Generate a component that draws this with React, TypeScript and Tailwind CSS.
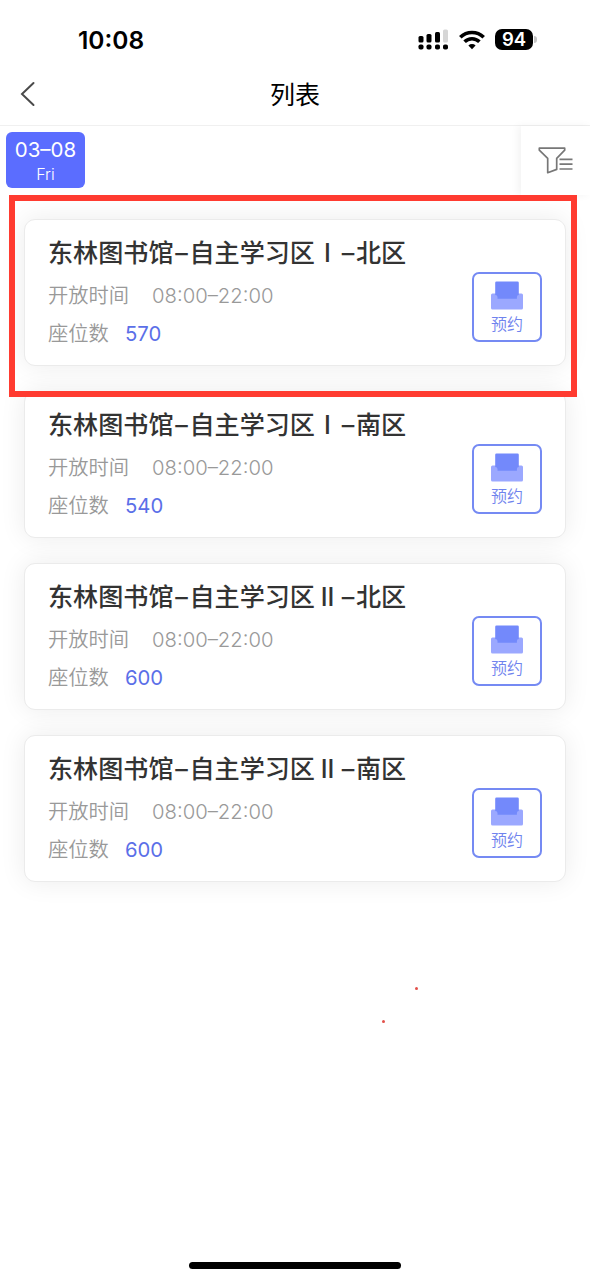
type Area = {
  id: number;
  building: string;
  room: string;
  numeral: string;
  side: string;
  hours: string;
  seats: number;
};

const areas: Area[] = [
  { id: 1, building: "东林图书馆", room: "自主学习区", numeral: "I", side: "北区", hours: "08:00–22:00", seats: 570 },
  { id: 2, building: "东林图书馆", room: "自主学习区", numeral: "I", side: "南区", hours: "08:00–22:00", seats: 540 },
  { id: 3, building: "东林图书馆", room: "自主学习区", numeral: "II", side: "北区", hours: "08:00–22:00", seats: 600 },
  { id: 4, building: "东林图书馆", room: "自主学习区", numeral: "II", side: "南区", hours: "08:00–22:00", seats: 600 },
];

function SignalIcon() {
  return (
    <svg width="31" height="22" viewBox="0 0 31 22">
      <rect x="0.5" y="8" width="5" height="6.5" rx="1.5" />
      <rect x="8.5" y="6" width="5" height="8.5" rx="1.5" />
      <rect x="17" y="4" width="5" height="10.5" rx="1.5" />
      <rect x="25" y="1.5" width="5" height="13" rx="1.5" fill="#d6d6d6" />
      <rect x="0.5" y="16.5" width="5" height="5" rx="1.8" />
      <rect x="8.5" y="16.5" width="5" height="5" rx="1.8" />
      <rect x="17" y="16.5" width="5" height="5" rx="1.8" />
      <rect x="25" y="16.5" width="5" height="5" rx="1.8" />
    </svg>
  );
}

function WifiIcon() {
  return (
    <svg width="26" height="20" viewBox="0 0 26 20" fill="none" stroke="#000" strokeWidth="3.6">
      <path d="M1.3 7.2a16.8 16.8 0 0 1 23.4 0" />
      <path d="M5.6 11.8a10.6 10.6 0 0 1 14.8 0" />
      <path d="M13 19.2l-3.6-3.8a5.2 5.2 0 0 1 7.2 0z" fill="#000" stroke="none" />
    </svg>
  );
}

function FilterIcon() {
  return (
    <svg width="36" height="28" viewBox="0 0 36 28" fill="none" stroke="#777" strokeWidth="1.7" strokeLinejoin="round">
      <path d="M1.3 1.2h25.4v2l-8 8.2v11l-9 3.3V11.4l-8.4-8.2z" />
      <path d="M21.5 12.4h13M21.5 17.2h13M21.5 22h13" />
    </svg>
  );
}

function SeatIcon() {
  return (
    <svg width="32" height="29" viewBox="0 0 32 29">
      <rect x="0" y="12.5" width="32" height="16" rx="1.5" fill="#9ba8ff" />
      <path d="M5.5 0.5h21a1.3 1.3 0 0 1 1.3 1.3v12.2q-1.9 0-1.9 1.9v1.8h-19.4v-1.8q0-1.9-2.3-1.9v-12.200a1.3 1.3 0 0 1 1.3-1.3z" fill="#7389fb" />
    </svg>
  );
}

function StatusBar() {
  return (
    <div className="flex h-[68px] items-start justify-between pt-[23px] pr-[53px] pl-[78px]">
      <span className="text-[24.5px] leading-[34px] font-semibold text-black">10:08</span>
      <div className="flex items-start pt-[5px]">
        <SignalIcon />
        <div className="ml-[10px] pt-[2px]">
          <WifiIcon />
        </div>
        <div className="ml-[10px] flex items-center pt-[1px]">
          <div className="flex h-[21px] w-[38px] items-center justify-center rounded-[7px] bg-black text-[18.5px] leading-none font-semibold text-white">
            94
          </div>
          <div className="ml-px h-[7px] w-[3px] rounded-r-full bg-[#c4c4c4]" />
        </div>
      </div>
    </div>
  );
}

function Dash() {
  return <span className="w-[16px] text-center">–</span>;
}

function AreaCard({ area }: { area: Area }) {
  return (
    <div className="flex h-[147px] items-start justify-between rounded-[11px] border border-[#ebebeb] bg-white pt-[14px] pr-[23px] pl-[23px] shadow-[0_0_26px_rgba(0,0,0,0.08)]">
      <div>
        <h2 className="flex text-[25.1px] leading-[38px] font-medium whitespace-nowrap text-[#333]">
          <span>{area.building}</span>
          <Dash />
          <span>{area.room}</span>
          <span className="w-[25px] text-center">{area.numeral}</span>
          <Dash />
          <span>{area.side}</span>
        </h2>
        <p className="mt-[5px] flex text-[20.3px] leading-[38px] font-[350] text-[#999]">
          <span className="w-[104px]">开放时间</span>
          <span className="leading-[37px]">{area.hours}</span>
        </p>
        <p className="flex text-[20.3px] leading-[38px] font-[350] text-[#999]">
          <span className="w-[77px]">座位数</span>
          <span className="leading-[37px] font-normal text-[#5b6fe8]">{area.seats}</span>
        </p>
      </div>
      <button className="mt-[38px] flex h-[70px] w-[70px] flex-col items-center rounded-[7px] border-2 border-[#758af3] pt-[7px] text-[#6f83ee]">
        <SeatIcon />
        <span className="text-[16px] leading-[29px] font-[350]">预约</span>
      </button>
    </div>
  );
}

export default function App() {
  return (
    <div className="relative flex h-[1280px] w-[590px] flex-col overflow-hidden bg-white font-[Inter,'Noto_Sans_CJK_SC',sans-serif]">
      <StatusBar />
      <header className="relative flex h-[58px] items-center justify-center border-b border-[#f0f0f0] pb-[3px]">
        <svg className="absolute top-[13px] left-[20px]" width="16" height="26" viewBox="0 0 16 26" fill="none" stroke="#4a4a4a" strokeWidth="2" strokeLinecap="round">
          <path d="M13.5 2L2 13l11.5 11" />
        </svg>
        <h1 className="text-[25px] leading-[36px] text-black">列表</h1>
      </header>

      <div className="relative z-10 flex h-[69px] justify-between bg-white">
        <div className="mt-[6px] ml-[6px] flex h-[56px] w-[79px] flex-col items-center rounded-[6px] bg-[#5b6dff] text-white">
          <span className="mt-[5px] text-[20.5px] leading-[26px]">03–08</span>
          <span className="text-[16px] leading-[22px] font-light">Fri</span>
        </div>
        <div className="flex w-[69px] items-center justify-center bg-white shadow-[-3px_0_8px_rgba(0,0,0,0.05)]">
          <FilterIcon />
        </div>
      </div>

      <main className="flex flex-col gap-[25px] pt-[24px] pr-[24px] pl-[24px]">
        {areas.map((area) => (
          <AreaCard key={area.id} area={area} />
        ))}
      </main>

      {/* highlighted first entry */}
      <div className="absolute top-[195px] left-[9px] z-20 h-[202px] w-[568px] border-[6px] border-[#ff3b30]" />

      <span className="absolute top-[987px] left-[415px] h-[3px] w-[3px] rounded-full bg-[#e2504a]" />
      <span className="absolute top-[1020px] left-[382px] h-[3px] w-[3px] rounded-full bg-[#e2504a]" />

      <div className="absolute top-[1262px] left-[189px] h-[7px] w-[212px] rounded-full bg-black" />
    </div>
  );
}
